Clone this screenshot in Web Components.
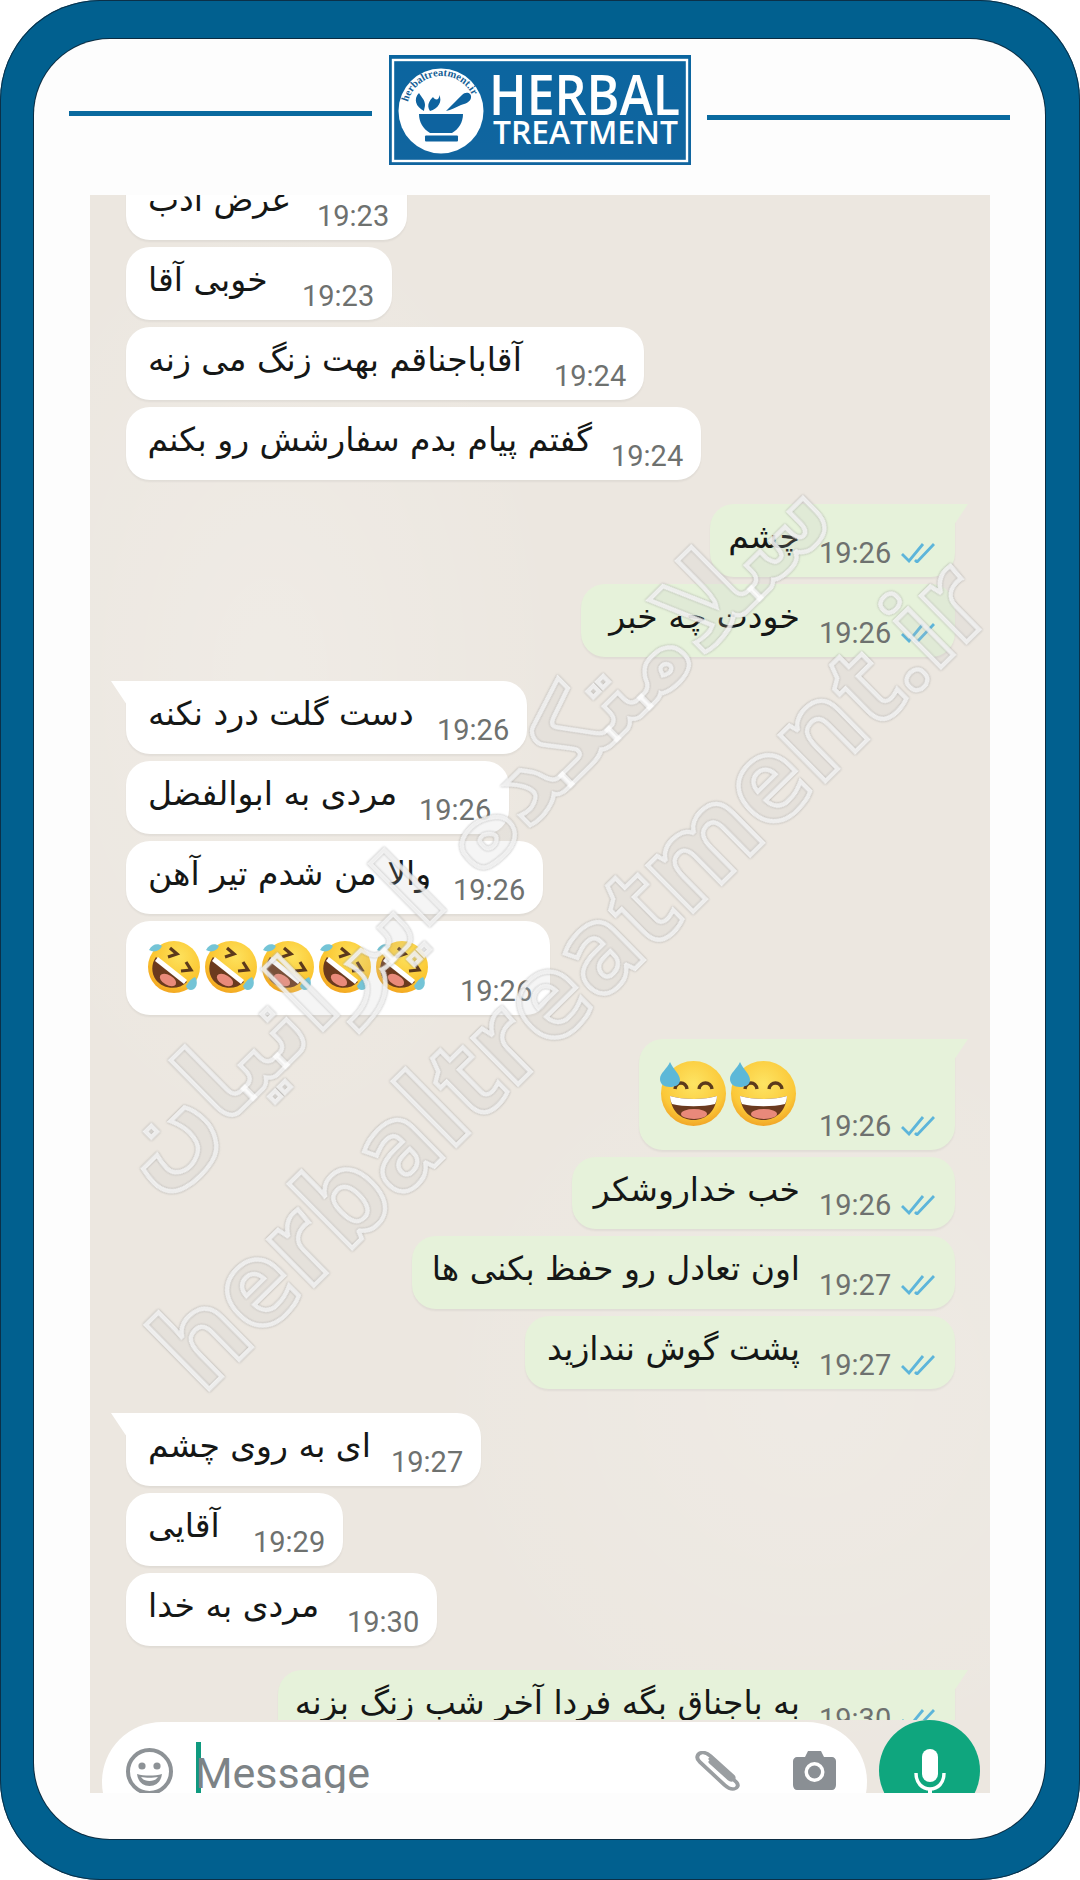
<!DOCTYPE html>
<html lang="fa">
<head>
<meta charset="utf-8">
<title>Herbal Treatment</title>
<style>
  html, body { margin: 0; padding: 0; background: #fff; }
</style>
</head>
<body>
<phone-frame>
  <site-header></site-header>
  <chat-panel>
    <chat-bubble side="in" w="281" time="19:23" style="margin-top:-28px">عرض ادب</chat-bubble>
    <chat-bubble side="in" w="266" time="19:23">خوبی آقا</chat-bubble>
    <chat-bubble side="in" w="518" time="19:24">آقاباجناقم بهت زنگ می زنه</chat-bubble>
    <chat-bubble side="in" w="575" time="19:24">گفتم پیام بدم سفارشش رو بکنم</chat-bubble>

    <chat-bubble side="out" w="245" time="19:26" tail gap>چشم</chat-bubble>
    <chat-bubble side="out" w="374" time="19:26">خودت چه خبر</chat-bubble>

    <chat-bubble side="in" w="401" time="19:26" tail gap>دست گلت درد نکنه</chat-bubble>
    <chat-bubble side="in" w="383" time="19:26">مردی به ابوالفضل</chat-bubble>
    <chat-bubble side="in" w="417" time="19:26">والا من شدم تیر آهن</chat-bubble>
    <chat-bubble side="in" w="424" h="94" time="19:26" emoji>
      <emoji-rofl></emoji-rofl><emoji-rofl></emoji-rofl><emoji-rofl></emoji-rofl><emoji-rofl></emoji-rofl><emoji-rofl></emoji-rofl>
    </chat-bubble>

    <chat-bubble side="out" w="316" h="111" time="19:26" tail gap emoji>
      <emoji-sweat></emoji-sweat><emoji-sweat></emoji-sweat>
    </chat-bubble>
    <chat-bubble side="out" w="383" h="72" time="19:26">خب خداروشکر</chat-bubble>
    <chat-bubble side="out" w="543" time="19:27">اون تعادل رو حفظ بکنی ها</chat-bubble>
    <chat-bubble side="out" w="430" time="19:27">پشت گوش نندازید</chat-bubble>

    <chat-bubble side="in" w="355" time="19:27" tail gap>ای به روی چشم</chat-bubble>
    <chat-bubble side="in" w="217" time="19:29">آقایی</chat-bubble>
    <chat-bubble side="in" w="311" time="19:30">مردی به خدا</chat-bubble>

    <chat-bubble side="out" w="677" time="19:30" tail gap>به باجناق بگه فردا آخر شب زنگ بزنه</chat-bubble>
  </chat-panel>
</phone-frame>

<script>
class PhoneFrame extends HTMLElement {
  constructor() {
    super();
    this.attachShadow({ mode: "open" });
  }

  connectedCallback() {
    this.shadowRoot.innerHTML = /* html */ `
      <style>
        :host {
          display: block;
          width: 1080px;
          height: 1880px;
          box-sizing: border-box;
          padding: 39px 35px 41px 34px;
          background: #fff;
          position: relative;
        }
        .back {
          position: absolute;
          inset: 0;
          background: #01608f;
          border-radius: 100px;
          box-shadow: inset 0 0 0 1px #0b3048;
        }
        .screen {
          position: relative;
          height: 100%;
          background: #fdfdfd;
          border-radius: 76px;
          overflow: hidden;
          box-shadow: 0 0 0 1px #0b2c42;
          display: flex;
          flex-direction: column;
        }
      </style>
      <div class="back"></div>
      <div class="screen"><slot></slot></div>
    `;
  }
}

class SiteHeader extends HTMLElement {
  constructor() {
    super();
    this.attachShadow({ mode: "open" });
  }

  connectedCallback() {
    this.shadowRoot.innerHTML = /* html */ `
      <style>
        :host {
          display: flex;
          flex: 0 0 156px;
          box-sizing: border-box;
          padding: 16px 35px 0 35px;
          align-items: flex-start;
          gap: 17px;
        }
        .line { width: 303px; height: 5px; background: #0a6a9f; }
        .line.l { margin-top: 56px; }
        .line.r { margin-top: 60px; margin-left: -1px; }
      </style>
      <div class="line l"></div>
      <herbal-logo></herbal-logo>
      <div class="line r"></div>
    `;
  }
}

class HerbalLogo extends HTMLElement {
  constructor() {
    super();
    this.attachShadow({ mode: "open" });
  }

  connectedCallback() {
    this.shadowRoot.innerHTML = /* html */ `
      <style>
        :host { display: block; width: 302px; height: 110px; }
        svg { display: block; }
        .big { font: 600 56px "Open Sans", sans-serif; fill: #fff; }
        .small { font: 600 32px "Open Sans", sans-serif; fill: #fff; }
        .ring { font: 700 10.5px "Liberation Serif", serif; fill: #175f96; }
      </style>
      <svg width="302" height="110" viewBox="0 0 302 110">
        <defs>
          <linearGradient id="logoBg" x1="0" y1="0" x2="0" y2="1">
            <stop offset="0" stop-color="#0b659f"/>
            <stop offset="1" stop-color="#11659f"/>
          </linearGradient>
          <path id="arc" d="M19 47 A34.500 34.500 0 0 1 85 44"/>
        </defs>
        <rect width="302" height="110" fill="url(#logoBg)"/>
        <rect x="4" y="5" width="294" height="101" fill="none" stroke="#fff" stroke-width="2.4"/>
        <circle cx="52" cy="56" r="42.5" fill="#fff"/>
        <text class="ring"><textPath href="#arc" textLength="84" lengthAdjust="spacingAndGlyphs">herbaltreatment.ir</textPath></text>
        <path d="M30 59 H74 C74 67 70 74 63 78 H41 C34 74 30 67 30 59Z" fill="#0e639f"/>
        <rect x="36" y="80.5" width="33" height="6" rx="1" fill="#0e639f"/>
        <path d="M57 56 C63 50 69 44 73 40 C77 36 83 38 82 43 C81 47 76 49 72 50 C67 52 62 55 57 56Z" fill="#0e639f"/>
        <path d="M35 56 C27 52 24 44 30 38 C33 43 36 45 36 50 C36 52 35 54 35 56Z" fill="#0e639f"/>
        <path d="M41 56 C37 50 41 45 44 42 C46 46 51 45 50 40 C54 46 49 54 41 56Z" fill="#0e639f"/>
        <text class="big" x="100" y="60" textLength="191" lengthAdjust="spacingAndGlyphs">HERBAL</text>
        <text class="small" x="104" y="89" textLength="185" lengthAdjust="spacingAndGlyphs">TREATMENT</text>
      </svg>
    `;
  }
}

class ChatPanel extends HTMLElement {
  constructor() {
    super();
    this.attachShadow({ mode: "open" });
  }

  connectedCallback() {
    this.shadowRoot.innerHTML = /* html */ `
      <style>
        :host {
          display: flex;
          flex-direction: column;
          flex: 0 0 1598px;
          margin: 0 55px 0 56px;
          overflow: hidden;
          position: relative;
          background:
            radial-gradient(ellipse 300px 500px at 20% 30%, rgba(255,255,255,.18), transparent),
            radial-gradient(ellipse 400px 400px at 80% 75%, rgba(255,255,255,.14), transparent),
            #ece7e0;
        }
        .list {
          flex: 0 0 1525px;
          overflow: hidden;
          display: flex;
          flex-direction: column;
          gap: 7px;
          box-sizing: border-box;
          padding: 0 35px 0 36px;
        }
      </style>
      <div class="list"><slot></slot></div>
      <message-bar></message-bar>
      <water-mark></water-mark>
    `;
  }
}

class ChatBubble extends HTMLElement {
  constructor() {
    super();
    this.attachShadow({ mode: "open" });
  }

  static get styles() {
    return /* css */`
      :host {
        display: block;
        flex: none;
        position: relative;
        box-sizing: border-box;
        border-radius: 24px;
        background: #fff;
        box-shadow: 0 2px 2px rgba(0,0,0,.05);
        align-self: flex-start;
      }
      :host([side="out"]) { align-self: flex-end; background: #e6f2da; }
      :host([gap]) { margin-top: 17px; }
      :host([tail][side="in"]) { border-top-left-radius: 0; }
      :host([tail][side="out"]) { border-top-right-radius: 0; }

      .tail {
        display: none;
        position: absolute;
        top: 0;
        width: 16px;
        height: 24px;
        background: inherit;
      }
      :host([tail]) .tail { display: block; }
      :host([side="in"]) .tail { left: -15px; clip-path: polygon(0 0, 100% 0, 100% 100%); }
      :host([side="out"]) .tail { right: -13px; clip-path: polygon(0 0, 100% 0, 0 100%); }

      .row {
        display: flex;
        height: 100%;
        box-sizing: border-box;
        padding: 0 18px 0 22px;
        align-items: flex-end;
      }
      :host([side="out"]) .row { padding-right: 20px; }

      .text {
        flex: 1;
        min-width: 0;
        align-self: flex-start;
        padding-top: 11px;
        direction: rtl;
        text-align: left;
        white-space: nowrap;
        color: #151716;
        font: 33px/44px "DejaVu Sans", "Noto Sans", sans-serif;
      }
      :host([side="out"]) .text { text-align: right; padding-right: 0; }
      :host([emoji]) .text { display: flex; direction: ltr; padding-top: 20px; }
      :host([emoji][side="out"]) .text { padding-top: 22px; gap: 5px; }
      :host([emoji][side="in"]) .text { gap: 5px; }

      .time {
        flex: none;
        width: 72px;
        margin-left: 19px;
        margin-bottom: 10px;
        color: #6e716f;
        font: 29px/28px "Roboto", sans-serif;
        text-align: right;
      }
      .ticks { flex: none; margin: 0 0 14px 10px; display: none; }
      :host([side="out"]) .ticks { display: block; }
    `;
  }

  connectedCallback() {
    this.style.width = this.getAttribute("w") + "px";
    this.style.height = (this.getAttribute("h") || 73) + "px";
    this.shadowRoot.innerHTML = /* html */ `
      <style>${ChatBubble.styles}</style>
      <span class="tail"></span>
      <div class="row">
        <div class="text"><slot></slot></div>
        <span class="time">${this.getAttribute("time")}</span>
        <svg class="ticks" width="34" height="20" viewBox="0 0 34 20" fill="none" stroke="#5db5da" stroke-width="2.8">
          <path d="M1 11 L8 18 L22 1"/>
          <path d="M14 17 L16 19 L33 1"/>
        </svg>
      </div>
    `;
  }
}

class EmojiRofl extends HTMLElement {
  constructor() {
    super();
    this.attachShadow({ mode: "open" });
  }

  connectedCallback() {
    this.shadowRoot.innerHTML = /* html */ `
      <style>
        :host { display: block; width: 52px; height: 52px; flex: none; }
        svg { display: block; overflow: visible; }
      </style>
      <svg width="52" height="52" viewBox="0 0 52 52">
        <defs>
          <radialGradient id="f" cx=".6" cy=".3" r=".8">
            <stop offset="0" stop-color="#fde15c"/>
            <stop offset=".65" stop-color="#fbc52f"/>
            <stop offset="1" stop-color="#ef9a1b"/>
          </radialGradient>
        </defs>
        <circle cx="26" cy="26" r="26" fill="url(#f)"/>
        <path d="M8 16 L39 41 C30 50 15 48 8 39 C3 32 3 23 8 16Z" fill="#6b3a1e"/>
        <path d="M10 16 L39 39 L36 43 L7 20Z" fill="#fff"/>
        <ellipse cx="20" cy="39" rx="9" ry="5" transform="rotate(30 20 39)" fill="#e98a7a"/>
        <path d="M22 7 L29 13 L20 16" fill="none" stroke="#5c3a1c" stroke-width="3.2"/>
        <path d="M38 21 L43 29 L33 30" fill="none" stroke="#5c3a1c" stroke-width="3.2"/>
        <path d="M1 9 C4 3 10 2 14 5 C12 10 6 12 1 9Z" fill="#74c4d6"/>
        <path d="M38 45 C41 40 44 37 47 36 C50 40 49 46 46 48 C43 50 39 49 38 45Z" fill="#74c4d6"/>
      </svg>
    `;
  }
}

class EmojiSweat extends HTMLElement {
  constructor() {
    super();
    this.attachShadow({ mode: "open" });
  }

  connectedCallback() {
    this.shadowRoot.innerHTML = /* html */ `
      <style>
        :host { display: block; width: 65px; height: 65px; flex: none; }
        svg { display: block; overflow: visible; }
      </style>
      <svg width="65" height="65" viewBox="0 0 65 65">
        <defs>
          <radialGradient id="s" cx=".5" cy=".35" r=".7">
            <stop offset="0" stop-color="#fde463"/>
            <stop offset=".7" stop-color="#fbc838"/>
            <stop offset="1" stop-color="#ee9a22"/>
          </radialGradient>
        </defs>
        <circle cx="32.5" cy="32.5" r="32.5" fill="url(#s)"/>
        <path d="M9 35 C22 39 44 39 56 35 C55 50 45 59 32.5 59 C20 59 10 50 9 35Z" fill="#6b3a1e"/>
        <path d="M9 35 C22 39 44 39 56 35 C56 38 55 41 54 43 C42 46 23 46 11 43 C10 41 9 38 9 35Z" fill="#fff"/>
        <ellipse cx="33" cy="53" rx="13" ry="5" fill="#e9897a"/>
        <path d="M14 28 C15 20 25 20 26 28" fill="none" stroke="#5c3a1c" stroke-width="3.4"/>
        <path d="M38 28 C39 20 50 20 51 28" fill="none" stroke="#5c3a1c" stroke-width="3.4"/>
        <path d="M9 1 C12 8 19 13 19 19 C19 24 14 26 9 26 C3 26 -1 23 -1 18 C-1 12 6 8 9 1Z" fill="#5cb8d8"/>
      </svg>
    `;
  }
}

class MessageBar extends HTMLElement {
  constructor() {
    super();
    this.attachShadow({ mode: "open" });
  }

  connectedCallback() {
    this.shadowRoot.innerHTML = /* html */ `
      <style>
        :host {
          display: flex;
          flex: none;
          height: 101px;
          gap: 12px;
          padding: 0 10px 0 12px;
          align-items: flex-start;
        }
        .pill {
          flex: 0 0 765px;
          height: 120px;
          margin-top: 2px;
          box-sizing: border-box;
          padding: 0 31px 0 24px;
          border-radius: 60px;
          background: #fff;
          display: flex;
          align-items: flex-start;
        }
        .smile { margin-top: 26px; flex: none; }
        .caret { width: 5px; height: 60px; margin: 20px 0 0 23px; background: #0f9a7f; flex: none; }
        .hint {
          margin: 19px 0 0 -6px;
          color: #7d8386;
          font: 43px/64px "Roboto", sans-serif;
          flex: 1;
        }
        .clip { margin-top: 29px; margin-right: 52px; flex: none; }
        .cam { margin-top: 28px; flex: none; }
        .mic {
          flex: none;
          width: 101px;
          height: 101px;
          border-radius: 50%;
          background: #0fa67e;
          display: flex;
          justify-content: center;
          padding-top: 29px;
          box-sizing: border-box;
        }
      </style>
      <div class="pill">
        <svg class="smile" width="47" height="47" viewBox="0 0 47 47">
          <circle cx="23.5" cy="23.5" r="21.5" fill="none" stroke="#8d9296" stroke-width="4"/>
          <circle cx="16" cy="18" r="3.6" fill="#8d9296"/>
          <circle cx="31" cy="18" r="3.6" fill="#8d9296"/>
          <path d="M11 26 C18 28 29 28 36 26 C35 34 30 38 23.5 38 C17 38 12 34 11 26Z" fill="#8d9296"/>
          <path d="M15 29 C20 30 27 30 32 29 C30 32 27 33 23.5 33 C20 33 17 32 15 29Z" fill="#fff"/>
        </svg>
        <span class="caret"></span>
        <span class="hint">Message</span>
        <svg class="clip" width="47" height="40" viewBox="0 0 40 40" preserveAspectRatio="none" fill="none" stroke="#9a9ea1" stroke-width="3.4" stroke-linecap="round">
          <path d="M14 8 L36 31 C39 35 36 38 33 38 C30 38 28 36 26 34 L5 11 C1 7 3 2 7 1.500 C10 1 12 3 14 5 L33 25 C35 28 32 30 30 28 L14 11"/>
        </svg>
        <svg class="cam" width="43" height="40" viewBox="0 0 43 40">
          <path d="M4 7 H12 L15 1 H28 L31 7 H39 C41 7 43 9 43 11 V35 C43 38 41 40 39 40 H4 C2 40 0 38 0 35 V11 C0 9 2 7 4 7Z" fill="#8a8f94"/>
          <circle cx="21.500" cy="22" r="10" fill="#fff"/>
          <circle cx="21.500" cy="22" r="6.500" fill="#8a8f94"/>
        </svg>
      </div>
      <div class="mic">
        <svg width="32" height="72" viewBox="0 0 32 72" fill="none">
          <rect x="8" y="0" width="16" height="33" rx="8" fill="#fff"/>
          <path d="M2 24 C2 34 8 40 16 40 C24 40 30 34 30 24" stroke="#fff" stroke-width="3.4"/>
          <path d="M16 40 V72" stroke="#fff" stroke-width="4"/>
        </svg>
      </div>
    `;
  }
}

class WaterMark extends HTMLElement {
  constructor() {
    super();
    this.attachShadow({ mode: "open" });
  }

  connectedCallback() {
    this.shadowRoot.innerHTML = /* html */ `
      <style>
        :host {
          position: absolute;
          inset: 0;
          pointer-events: none;
          overflow: hidden;
        }
        div {
          position: absolute;
          white-space: nowrap;
          color: rgba(255,255,255,.1);
          -webkit-text-stroke: 4.5px rgba(255,255,255,.8);
          filter: drop-shadow(0 0 1px rgba(110,110,110,.75));
          transform-origin: 0 100%;
          transform: rotate(-44.600deg);
        }
        .en {
          left: 128px;
          top: 1082px;
          font: 700 118px/134px "Open Sans", sans-serif;
        }
        .fa {
          left: 84px;
          top: 888px;
          direction: rtl;
          font: 700 112px/130px "DejaVu Sans", sans-serif;
        }
      </style>
      <div class="fa">سلامتکده ایرانیان</div>
      <div class="en">herbaltreatment.ir</div>
    `;
  }
}

customElements.define("phone-frame", PhoneFrame);
customElements.define("site-header", SiteHeader);
customElements.define("herbal-logo", HerbalLogo);
customElements.define("chat-panel", ChatPanel);
customElements.define("chat-bubble", ChatBubble);
customElements.define("emoji-rofl", EmojiRofl);
customElements.define("emoji-sweat", EmojiSweat);
customElements.define("message-bar", MessageBar);
customElements.define("water-mark", WaterMark);
</script>
</body>
</html>
